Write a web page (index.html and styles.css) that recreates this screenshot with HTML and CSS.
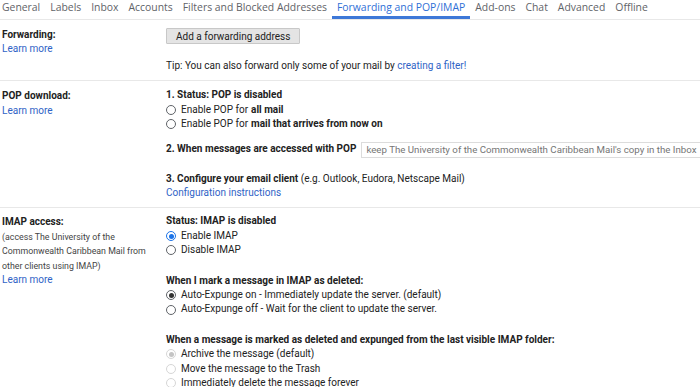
FILE: index.html
```html
<!DOCTYPE html>
<html lang="en">
<head>
    <meta charset="UTF-8">
    <title>Settings - Forwarding and POP/IMAP</title>
    <link rel="stylesheet" href="styles.css">
</head>
<body>
    <div class="tabs">
        <span class="tab">General</span>
        <span class="tab">Labels</span>
        <span class="tab">Inbox</span>
        <span class="tab">Accounts</span>
        <span class="tab">Filters and Blocked Addresses</span>
        <span class="tab active">Forwarding and POP/IMAP</span>
        <span class="tab">Add-ons</span>
        <span class="tab">Chat</span>
        <span class="tab">Advanced</span>
        <span class="tab">Offline</span>
    </div>

    <div class="section">
        <div class="label">
            <b>Forwarding:</b>
            <a href="#">Learn more</a>
        </div>
        <div class="content">
            <button class="btn">Add a forwarding address</button>
            <p class="tip">Tip: You can also forward only some of your mail by <a href="#">creating a filter!</a></p>
        </div>
    </div>

    <div class="section">
        <div class="label">
            <b>POP download:</b>
            <a href="#">Learn more</a>
        </div>
        <div class="content">
            <div class="group">
                <b>1. Status: POP is disabled</b>
                <label class="option"><span class="radio"></span>Enable POP for <b>all mail</b></label>
                <label class="option"><span class="radio"></span>Enable POP for <b>mail that arrives from now on</b></label>
            </div>
            <div class="group select-row">
                <b>2. When messages are accessed with POP</b>
                <span class="select">keep The University of the Commonwealth Caribbean Mail's copy in the Inbox</span>
            </div>
            <div class="group">
                <div><b>3. Configure your email client</b> (e.g. Outlook, Eudora, Netscape Mail)</div>
                <a href="#">Configuration instructions</a>
            </div>
        </div>
    </div>

    <div class="section last">
        <div class="label">
            <b>IMAP access:</b>
            <span class="note">(access The University of the Commonwealth Caribbean Mail from other clients using IMAP)</span>
            <a href="#">Learn more</a>
        </div>
        <div class="content">
            <div class="group">
                <b>Status: IMAP is disabled</b>
                <label class="option"><span class="radio on blue"></span>Enable IMAP</label>
                <label class="option"><span class="radio"></span>Disable IMAP</label>
            </div>
            <div class="group">
                <b>When I mark a message in IMAP as deleted:</b>
                <label class="option"><span class="radio on"></span>Auto-Expunge on - Immediately update the server. (default)</label>
                <label class="option"><span class="radio"></span>Auto-Expunge off - Wait for the client to update the server.</label>
            </div>
            <div class="group">
                <b>When a message is marked as deleted and expunged from the last visible IMAP folder:</b>
                <label class="option disabled"><span class="radio on"></span>Archive the message (default)</label>
                <label class="option disabled"><span class="radio"></span>Move the message to the Trash</label>
                <label class="option disabled"><span class="radio"></span>Immediately delete the message forever</label>
            </div>
        </div>
    </div>
</body>
</html>
```

FILE: styles.css
```css
* {
    margin: 0;
    padding: 0;
    box-sizing: border-box;
}

body {
    font-family: Roboto, "Liberation Sans", Arial, sans-serif;
    font-size: 10px;
    line-height: 14.4px;
    color: #222;
    background: #fff;
    overflow: hidden;
    width: 700px;
}

a {
    color: #2f63c6;
    text-decoration: none;
}

b {
    font-weight: 700;
}

.tabs {
    display: flex;
    height: 20px;
    margin-left: -3px;
    border-bottom: 1px solid #e8e8e8;
    font-family: "Open Sans", Roboto, sans-serif;
    font-size: 10.4px;
    line-height: 15px;
    white-space: nowrap;
}

.tab {
    padding: 0 5px;
    color: #5f6368;
    border-bottom: 3px solid transparent;
}

.tab.active {
    color: #2f6fd6;
    border-bottom-color: #3d78d8;
}

.section {
    display: grid;
    grid-template-columns: 166px 1fr;
    padding: 7px 0 7px;
    border-bottom: 1px solid #e8e8e8;
}

.section.last {
    border-bottom: none;
    padding-top: 6px;
}

.label {
    display: flex;
    flex-direction: column;
    align-items: flex-start;
    padding-left: 2px;
}

.label b {
    margin-top: 1px;
}

.note {
    font-size: 8.8px;
    color: #444;
    padding-right: 14px;
}

.content {
    white-space: nowrap;
}

.btn {
    display: block;
    height: 16px;
    padding: 0 9px;
    margin-top: 1px;
    font-family: inherit;
    font-size: 10px;
    color: #222;
    background: #e4e4e4;
    border: 1px solid #c8c8c8;
    border-radius: 1px;
}

.tip {
    margin-top: 15px;
}

.group {
    display: flex;
    flex-direction: column;
    align-items: flex-start;
}

.group + .group {
    margin-top: 16px;
}

.select-row {
    flex-direction: row;
    align-items: center;
    margin-top: 10px !important;
    height: 16px;
}

.select-row + .group {
    margin-top: 14px !important;
}

.select {
    margin-left: 5px;
    height: 16px;
    line-height: 14px;
    padding: 0 3px 0 4px;
    border: 1px solid #dcdcdc;
    font-size: 9.7px;
    color: #757575;
}

.option {
    display: flex;
    align-items: center;
}

.option b {
    margin-left: 3px;
}

.radio {
    width: 10px;
    height: 10px;
    margin-right: 5px;
    border: 1px solid #5f6368;
    border-radius: 50%;
    display: flex;
    align-items: center;
    justify-content: center;
}

.radio.on::after {
    content: "";
    width: 5px;
    height: 5px;
    border-radius: 50%;
    background: #333;
}

.radio.blue {
    border-color: #1a73e8;
}

.radio.blue::after {
    background: #1a73e8;
}

.option.disabled .radio {
    border-color: #d6d6d6;
}

.option.disabled .radio.on::after {
    background: #c4c4c4;
}
```
